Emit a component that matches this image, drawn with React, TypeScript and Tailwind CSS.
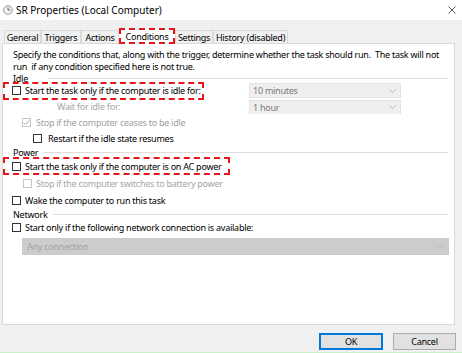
import React from 'react';

function Check({ checked = false, disabled = false }: { checked?: boolean; disabled?: boolean }) {
  return (
    <span
      className={`flex h-[9px] w-[9px] shrink-0 items-center justify-center border bg-white ${
        disabled ? 'border-[#c6c6c6]' : 'border-[#333333]'
      }`}
    >
      {checked && (
        <svg width="7" height="7" viewBox="0 0 7 7">
          <path d="M0.6 3.6 L2.6 5.6 L6.4 1.2" stroke="#a8a8a8" strokeWidth="1" fill="none" />
        </svg>
      )}
    </span>
  );
}

function Chevron({ color = '#a8a8a8' }: { color?: string }) {
  return (
    <svg width="7" height="4" viewBox="0 0 7 4">
      <path d="M0.5 0.5 L3.5 3.5 L6.5 0.5" stroke={color} strokeWidth="0.8" fill="none" />
    </svg>
  );
}

function GroupLabel({ label, gap, h }: { label: string; gap: string; h: string }) {
  return (
    <div className={`flex items-center pl-[10px] pr-[6px] ${h}`}>
      <span>{label}</span>
      <span className={`h-px flex-1 bg-[#dcdcdc] ${gap}`} />
    </div>
  );
}

const tabs = [
  { name: 'General', w: 'w-[37px]' },
  { name: 'Triggers', w: 'w-[40px]' },
  { name: 'Actions', w: 'w-[38px]' },
  { name: 'Conditions', w: 'w-[56px]', active: true },
  { name: 'Settings', w: 'w-[38px]' },
  { name: 'History (disabled)', w: 'w-[75px]' },
];

export default function App() {
  return (
    <div className="flex h-[353px] w-[462px] flex-col overflow-hidden whitespace-nowrap bg-[#f0f0f0] font-['Noto_Sans',sans-serif] text-[9px] leading-none tracking-[-0.25px] text-black">
      {/* Title bar */}
      <div className="flex h-[20px] shrink-0 items-center bg-white pl-[3px] pr-[6px] tracking-normal">
        <svg width="10" height="10" viewBox="0 0 10 10">
          <circle cx="5" cy="5" r="4.3" fill="#f4f4f4" stroke="#8a8a8a" strokeWidth="0.9" />
          <path d="M5 2.2 V5 H7.2" stroke="#555" strokeWidth="0.9" fill="none" />
        </svg>
        <span className="ml-[3px] text-[10px]">SR Properties (Local Computer)</span>
        <svg className="ml-auto" width="8" height="8" viewBox="0 0 8 8">
          <path d="M0.5 0.5 L7.5 7.5 M7.5 0.5 L0.5 7.5" stroke="#333" strokeWidth="0.8" />
        </svg>
      </div>

      {/* Tabs */}
      <div className="mt-[8px] flex h-[15px] shrink-0 items-end pl-[4px]">
        {tabs.map((t) =>
          t.active ? (
            <div
              key={t.name}
              className={`relative z-10 mb-[-1px] flex h-[16px] items-center justify-center border-2 border-dashed border-[#e8141c] bg-white ${t.w}`}
            >
              {t.name}
            </div>
          ) : (
            <div
              key={t.name}
              className={`flex h-[13px] items-center justify-center border border-b-0 border-[#d9d9d9] bg-[#f0f0f0] ${t.w}`}
            >
              {t.name}
            </div>
          )
        )}
      </div>

      {/* Panel */}
      <div className="ml-[2px] flex h-[282px] w-[453px] shrink-0 flex-col border border-[#d9d9d9] bg-white pt-[5px]">
        <div className="pl-[10px] pr-[8px] leading-[12px]">
          <div>Specify the conditions that, along with the trigger, determine whether the task should run.&nbsp; The task will not</div>
          <div>run&nbsp; if any condition specified here is not true.</div>
        </div>

        <GroupLabel label="Idle" gap="ml-[20px]" h="h-[10px]" />

        <div className="flex h-[15px] items-center">
          <div className="flex h-[18px] w-[201px] items-center gap-[4px] border-2 border-dashed border-[#e8141c] pl-[7px]">
            <Check />
            <span>Start the task only if the computer is idle for:</span>
          </div>
          <div className="ml-[45px] flex h-[15px] w-[152px] items-center justify-between border border-[#e3e3e3] bg-[#efefef] pl-[3px] pr-[4px] text-[#7a7a7a]">
            <span>10 minutes</span>
            <Chevron />
          </div>
        </div>

        <div className="flex h-[17px] items-center">
          <span className="ml-[54px] w-[192px] text-[#a6a6a6]">Wait for idle for:</span>
          <div className="flex h-[14px] w-[152px] items-center justify-between border border-b-0 border-[#e3e3e3] bg-[#efefef] pl-[3px] pr-[4px] text-[#7a7a7a]">
            <span>1 hour</span>
            <Chevron />
          </div>
        </div>

        <div className="flex h-[15px] items-center gap-[5px] pl-[19px] text-[#a0a0a0]">
          <Check checked disabled />
          <span>Stop if the computer ceases to be idle</span>
        </div>

        <div className="flex h-[16px] items-center gap-[6px] pl-[30px]">
          <Check />
          <span>Restart if the idle state resumes</span>
        </div>

        <GroupLabel label="Power" gap="ml-[6px]" h="h-[12px]" />

        <div className="flex h-[16px] items-center">
          <div className="flex h-[18px] w-[227px] items-center gap-[4px] border-2 border-dashed border-[#e8141c] pl-[7px]">
            <Check />
            <span>Start the task only if the computer is on AC power</span>
          </div>
        </div>

        <div className="flex h-[18px] items-center gap-[4px] pl-[20px] text-[#a6a6a6]">
          <Check disabled />
          <span>Stop if the computer switches to battery power</span>
        </div>

        <div className="flex h-[17px] items-center gap-[4px] pl-[9px]">
          <Check />
          <span>Wake the computer to run this task</span>
        </div>

        <GroupLabel label="Network" gap="ml-[6px]" h="h-[10px]" />

        <div className="flex h-[16px] items-center gap-[4px] pl-[9px]">
          <Check />
          <span>Start only if the following network connection is available:</span>
        </div>

        <div className="ml-[19px] mt-[3px] flex h-[17px] w-[427px] items-center justify-between bg-[#cccccc] pl-[5px] pr-[6px] text-[#a3a3a3]">
          <span>Any connection</span>
          <Chevron color="#b4b4b4" />
        </div>
      </div>

      {/* Buttons */}
      <div className="flex flex-1 items-start justify-end gap-[10px] border-b border-[#c9efc9] pr-[6px] pt-[8px]">
        <button className="flex h-[17px] w-[64px] items-center justify-center border border-[#0078d7] bg-[#e1e1e1] outline outline-1 -outline-offset-2 outline-[#0078d7]">
          OK
        </button>
        <button className="flex h-[17px] w-[63px] items-center justify-center border border-[#adadad] bg-[#e1e1e1]">
          Cancel
        </button>
      </div>
    </div>
  );
}
